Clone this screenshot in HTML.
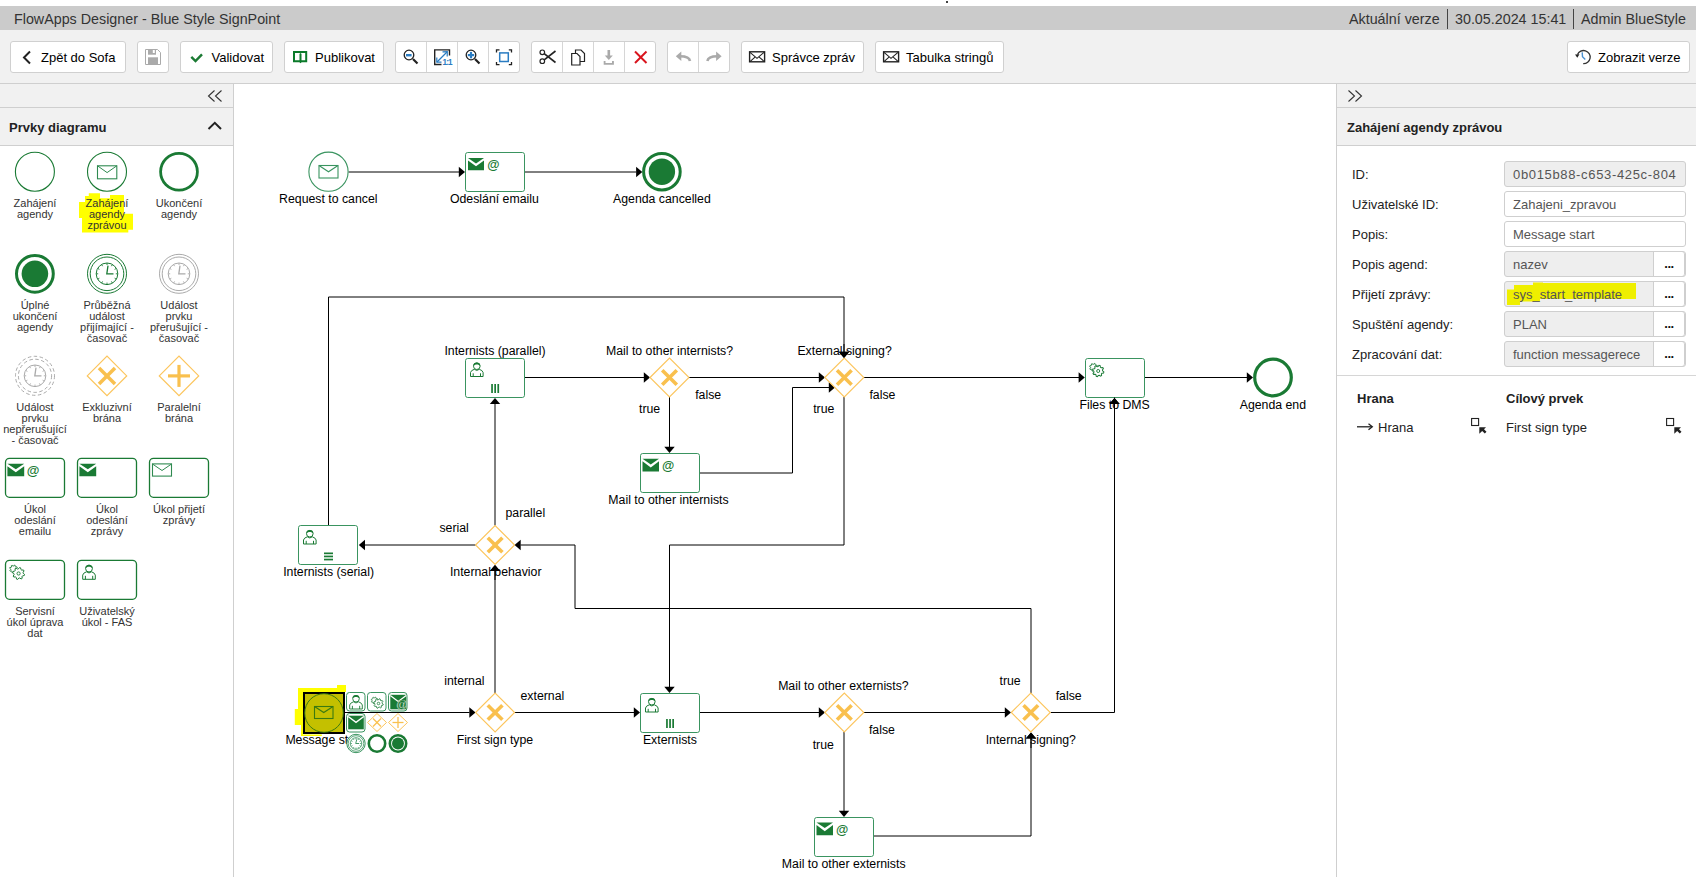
<!DOCTYPE html>
<html><head><meta charset="utf-8">
<style>
*{box-sizing:border-box;margin:0;padding:0}
html,body{width:1696px;height:877px;overflow:hidden;background:#fff;font-family:"Liberation Sans",sans-serif;color:#222}
.abs{position:absolute}
#title{position:absolute;left:0;top:6px;width:1696px;height:24px;background:#cbcbcb;font-size:14.3px;color:#333}
#title .t{position:absolute;left:14px;top:5px;white-space:nowrap}
#title .r{position:absolute;top:5px;white-space:nowrap}
#title .sep{position:absolute;top:3px;width:1px;height:20px;background:#444}
#tb{position:absolute;left:0;top:30px;width:1696px;height:54px;background:#f1f1f1;border-bottom:1px solid #cfcfcf}
.btn{position:absolute;top:11px;height:32px;background:#fff;border:1px solid #d0d0d0;border-radius:3px;font-size:13px;color:#000;white-space:nowrap}
.btn .lbl{position:absolute;top:8px}
.grp{position:absolute;top:11px;height:32px;background:#fff;border:1px solid #d0d0d0;border-radius:3px}
.grp .dv{position:absolute;top:0;width:1px;height:30px;background:#d6d6d6}
.grp svg{position:absolute}
#lp{position:absolute;left:0;top:84px;width:234px;height:793px;border-right:1px solid #cfcfcf;background:#fff}
.bar{position:absolute;left:0;width:100%;background:#f1f1f1;border-bottom:1px solid #cfcfcf}
#rp{position:absolute;left:1336px;top:84px;width:360px;height:793px;border-left:1px solid #cfcfcf;background:#fff}
.hdr{font-size:13px;font-weight:bold;color:#222;position:absolute;white-space:nowrap}
.pl{position:absolute;font-size:11px;line-height:11px;color:#222;text-align:center;width:72px}
.fl{position:absolute;left:15px;font-size:13px;color:#222;white-space:nowrap}
.inp{position:absolute;left:167px;width:182px;height:26px;border:1px solid #cfcfcf;border-radius:3px;background:#fff;font-size:13px;color:#555;white-space:nowrap;overflow:hidden}
.inp.g{background:#eeeeee}
.inp span{position:absolute;left:8px;top:5px}
.dots{position:absolute;right:0;top:-1px;width:32px;height:26px;border:1px solid #cfcfcf;border-radius:0 3px 3px 0;background:#fff;font-size:13px;line-height:24px;font-weight:bold;color:#111;text-align:center;letter-spacing:-0.5px}
</style></head><body>
<div class="abs" style="left:945.5px;top:0.5px;width:2.2px;height:2.2px;border-radius:50%;background:#000"></div>
<div id="title">
  <div class="t">FlowApps Designer - Blue Style SignPoint</div>
  <div class="r" style="left:1349px">Aktuální verze</div>
  <div class="sep" style="left:1447px"></div>
  <div class="r" style="left:1455px">30.05.2024 15:41</div>
  <div class="sep" style="left:1573px"></div>
  <div class="r" style="left:1581px">Admin BlueStyle</div>
</div>
<div id="tb">
  <div class="btn" style="left:10px;width:116px"><svg class="abs" style="left:0;top:0" width="40" height="32"><polyline points="19,9.5 13,15.5 19,21.5" fill="none" stroke="#222" stroke-width="2"/></svg><span class="lbl" style="left:30px">Zpět do Sofa</span></div>
  <div class="btn" style="left:137px;width:32px"><svg class="abs" style="left:0;top:0" width="32" height="32"><path d="M7.5,7.5 H19.5 L22.5,10.5 V22.5 H7.5 Z" fill="none" stroke="#aaa" stroke-width="1"/><rect x="10" y="7" width="8" height="5.7" fill="#aaa"/><rect x="14.8" y="8" width="2" height="3" fill="#fff"/><rect x="10" y="15.3" width="10" height="7.5" fill="#aaa"/></svg></div>
  <div class="btn" style="left:180px;width:93px"><svg class="abs" style="left:0;top:0" width="30" height="32"><polyline points="10.3,14.8 14.5,19 21,12.3" fill="none" stroke="#1b7a33" stroke-width="2.4"/></svg><span class="lbl" style="left:30.5px">Validovat</span></div>
  <div class="btn" style="left:284px;width:100px"><svg class="abs" style="left:0;top:0" width="30" height="32"><path d="M9,10 H14.8 L15.5,10.7 L16.2,10 H21.2 V19.2 H16.2 L15.5,19.9 L14.8,19.2 H9 Z M15.5,10.7 V19.4" fill="none" stroke="#0b7a2a" stroke-width="2"/></svg><span class="lbl" style="left:30px">Publikovat</span></div>
  <div class="grp" style="left:395px;width:125px">
    <div class="dv" style="left:30px"></div><div class="dv" style="left:61px"></div><div class="dv" style="left:92px"></div>
    <svg class="abs" style="left:0;top:0" width="125" height="32">
      <g transform="translate(0,0)"><circle cx="13" cy="13" r="4.8" fill="none" stroke="#222" stroke-width="1.3"/><rect x="10" y="12" width="5.6" height="2.4" fill="#2a7cc2"/><line x1="17" y1="17" x2="21.5" y2="21.5" stroke="#222" stroke-width="2.2"/></g>
      <g><path d="M38.7,17 V7.9 H53.5 V13.5 M38.7,17 V22.5 H45.5" fill="none" stroke="#222" stroke-width="1.4"/><line x1="41" y1="20" x2="51" y2="10" stroke="#2a7cc2" stroke-width="1.2"/><polyline points="46.5,9.8 51.3,9.7 51.2,14.5" fill="none" stroke="#2a7cc2" stroke-width="1.2"/><polyline points="40.8,15.5 40.8,20.2 45.5,20.2" fill="none" stroke="#2a7cc2" stroke-width="1.2"/><rect x="46.8" y="15.8" width="8" height="8" fill="#fff"/><text x="46.6" y="22.8" font-size="8.2" font-weight="bold" fill="#2a7cc2" font-family="Liberation Sans" letter-spacing="-0.9">1:1</text></g>
      <g><circle cx="75" cy="13" r="4.8" fill="none" stroke="#222" stroke-width="1.3"/><rect x="71.8" y="12" width="6.4" height="2.2" fill="#2a7cc2"/><rect x="73.9" y="9.9" width="2.2" height="6.4" fill="#2a7cc2"/><line x1="79" y1="17" x2="83.5" y2="21.5" stroke="#222" stroke-width="2.2"/></g>
      <g fill="none" stroke="#222" stroke-width="1.3"><polyline points="100.5,10.5 100.5,7.9 103.5,7.9"/><polyline points="112.8,7.9 115.5,7.9 115.5,10.5"/><polyline points="100.5,20 100.5,22.6 103.5,22.6"/><polyline points="112.8,22.6 115.5,22.6 115.5,20"/><rect x="103.7" y="10.9" width="8.6" height="8.6" stroke="#2a7cc2" stroke-width="1.5"/></g>
    </svg>
  </div>
  <div class="grp" style="left:531px;width:125px">
    <div class="dv" style="left:30px"></div><div class="dv" style="left:61px"></div><div class="dv" style="left:92px"></div>
    <svg class="abs" style="left:0;top:0" width="125" height="32">
      <g fill="none" stroke="#222" stroke-width="1.2"><circle cx="10.3" cy="10.3" r="2.3"/><circle cx="10.3" cy="19.2" r="2.3"/><line x1="12.2" y1="11.6" x2="23.5" y2="20.5" stroke-width="1.6"/><line x1="12.2" y1="17.9" x2="23.5" y2="9" stroke-width="1.6"/></g>
      <g fill="#fff" stroke="#222" stroke-width="1.2"><path d="M43.5,8 H49 L52.5,11.5 V19.5 H43.5 Z"/><path d="M39.7,11.5 H45 L48,14.5 V23 H39.7 Z"/></g>
      <g fill="#aaa"><rect x="75.5" y="8" width="2.6" height="6"/><polygon points="72.8,13.5 80.8,13.5 76.8,18"/><path d="M71.7,19 H73.5 V21 H80 V19 H81.9 V22.8 H71.7 Z"/></g>
      <g stroke="#d9141d" stroke-width="2"><line x1="103" y1="9.5" x2="114.5" y2="21"/><line x1="114.5" y1="9.5" x2="103" y2="21"/></g>
    </svg>
  </div>
  <div class="grp" style="left:667px;width:63px">
    <div class="dv" style="left:30px"></div>
    <svg class="abs" style="left:0;top:0" width="63" height="32">
      <g fill="none" stroke="#aaa" stroke-width="2.6"><path d="M12,14.3 Q21.3,14.3 22,19"/><path d="M49.4,14.3 Q40.1,14.3 39.4,19"/></g><g fill="#aaa"><polygon points="7.8,14.3 13.3,9.6 13.3,19"/><polygon points="53.6,14.3 48.1,9.6 48.1,19"/></g>
    </svg>
  </div>
  <div class="btn" style="left:741px;width:123px"><svg class="abs" style="left:0;top:0" width="30" height="32"><g transform="translate(-1,-0.7)"><rect x="8.6" y="10.5" width="15" height="10" fill="none" stroke="#222" stroke-width="1.4"/><polyline points="9,11 16,17 23,11" fill="none" stroke="#222" stroke-width="1.1"/><line x1="9" y1="20.3" x2="14" y2="15.8" stroke="#222" stroke-width="1.1"/><line x1="23.3" y1="20.3" x2="18.2" y2="15.8" stroke="#222" stroke-width="1.1"/></g></svg><span class="lbl" style="left:30px">Správce zpráv</span></div>
  <div class="btn" style="left:875px;width:129px"><svg class="abs" style="left:0;top:0" width="30" height="32"><g transform="translate(-1,-0.7)"><rect x="8.6" y="10.5" width="15" height="10" fill="none" stroke="#222" stroke-width="1.4"/><polyline points="9,11 16,17 23,11" fill="none" stroke="#222" stroke-width="1.1"/><line x1="9" y1="20.3" x2="14" y2="15.8" stroke="#222" stroke-width="1.1"/><line x1="23.3" y1="20.3" x2="18.2" y2="15.8" stroke="#222" stroke-width="1.1"/></g></svg><span class="lbl" style="left:30px">Tabulka stringů</span></div>
  <div class="btn" style="left:1567px;width:123px"><svg class="abs" style="left:0;top:0" width="30" height="32"><g transform="translate(-1.3,-0.6)"><path d="M10.8,13.2 A6.6,6.6 0 1 1 16.5,22.3" fill="none" stroke="#333" stroke-width="1.3"/><polygon points="8.3,13 12.8,12.8 10.6,16.4" fill="#222"/><polyline points="15.5,11 15.8,15.4 18.6,18" fill="none" stroke="#4a90d0" stroke-width="1.4"/></g></svg><span class="lbl" style="left:30px">Zobrazit verze</span></div>
</div>
<div id="lp">
  <div class="bar" style="top:0;height:24px"></div>
  <div class="bar" style="top:24px;height:38px"></div>
  <div class="hdr" style="left:9px;top:36px">Prvky diagramu</div>
  <svg class="abs" style="left:200px;top:0" width="33" height="62"><g fill="none" stroke="#333" stroke-width="1.1"><polyline points="14.5,6.5 8.5,12 14.5,17.5"/><polyline points="21.5,6.5 15.5,12 21.5,17.5"/><polyline points="8.5,45 14.8,38.8 21,45" stroke-width="2" stroke="#222"/></g></svg>
</div>
<div id="cv" class="abs" style="left:234px;top:84px;width:1102px;height:793px;background:#fff"></div>
<div id="rp">
  <div class="bar" style="top:0;height:24px"></div>
  <div class="bar" style="top:24px;height:38px"></div>
  <svg class="abs" style="left:0;top:0" width="40" height="24"><g fill="none" stroke="#333" stroke-width="1.1"><polyline points="11.5,6.5 17.5,12 11.5,17.5"/><polyline points="18.5,6.5 24.5,12 18.5,17.5"/></g></svg>
  <div class="hdr" style="left:10px;top:36px">Zahájení agendy zprávou</div>
  <div class="fl" style="top:83px">ID:</div><div class="inp g" style="top:77px"><span style="letter-spacing:0.66px">0b015b88-c653-425c-804</span></div>
  <div class="fl" style="top:113px">Uživatelské ID:</div><div class="inp" style="top:107px"><span>Zahajeni_zpravou</span></div>
  <div class="fl" style="top:143px">Popis:</div><div class="inp" style="top:137px"><span>Message start</span></div>
  <div class="fl" style="top:173px">Popis agend:</div><div class="inp g" style="top:167px"><span>nazev</span><div class="dots">...</div></div>
  <div class="fl" style="top:203px">Přijetí zprávy:</div><div class="inp g" style="top:197px"><svg class="abs" style="left:0;top:0" width="140" height="26"><path d="M2,23 V7.5 H9 V3 H28 V0.5 H38 V1 H131 V17 H35 V19.5 H15 V23 Z" fill="#efef00"/></svg><span>sys_start_template</span><div class="dots">...</div></div>
  <div class="fl" style="top:233px">Spuštění agendy:</div><div class="inp g" style="top:227px"><span>PLAN</span><div class="dots">...</div></div>
  <div class="fl" style="top:263px">Zpracování dat:</div><div class="inp g" style="top:257px"><span>function messagerece</span><div class="dots">...</div></div>
  <div class="abs" style="left:0;top:291px;width:359px;height:1px;background:#d6d6d6"></div>
  <div class="hdr" style="left:20px;top:307px">Hrana</div>
  <div class="hdr" style="left:169px;top:307px">Cílový prvek</div>
  <svg class="abs" style="left:0;top:320px" width="359" height="40"><g stroke="#222" fill="none"><line x1="20" y1="22.8" x2="35" y2="22.8" stroke-width="1.3"/><polyline points="31.5,19.8 35.3,22.8 31.5,25.8" stroke-width="1.3"/>
  <rect x="134.6" y="14.5" width="7" height="7" stroke-width="1.1"/><rect x="329.6" y="14.5" width="7" height="7" stroke-width="1.1"/></g>
  <g fill="#222"><path d="M142.3,23.2 H149 L147,25.2 L149.5,27.8 L147.8,29.5 L145.2,27 L142.3,29.8 Z"/><path d="M337.3,23.2 H344 L342,25.2 L344.5,27.8 L342.8,29.5 L340.2,27 L337.3,29.8 Z"/></g></svg>
  <div class="fl" style="left:41px;top:336px">Hrana</div>
  <div class="fl" style="left:169px;top:336px">First sign type</div>
</div>
<svg id="ov" class="abs" style="left:0;top:0" width="1696" height="877"><circle cx="34.9" cy="171.7" r="19.5" fill="none" stroke="#1a7a34" stroke-width="1.1"/>
<circle cx="107" cy="171.7" r="19.5" fill="none" stroke="#1a7a34" stroke-width="1.1"/>
<rect x="97.5" y="165.8" width="19.3" height="13" fill="none" stroke="#2f8a50" stroke-width="1.1"/><polyline points="97.5,165.8 107.1,172.6 116.8,165.8" fill="none" stroke="#2f8a50" stroke-width="1"/>
<circle cx="179" cy="171.7" r="18.4" fill="none" stroke="#1a7a34" stroke-width="2.8"/>
<circle cx="34.9" cy="273.8" r="18.4" fill="none" stroke="#1a7a34" stroke-width="3"/><circle cx="34.9" cy="273.8" r="13.3" fill="#1a7a34"/>
<circle cx="107" cy="273.8" r="19.5" fill="none" stroke="#1a7a34" stroke-width="1"/><circle cx="107" cy="273.8" r="16.8" fill="none" stroke="#1a7a34" stroke-width="1"/>
<circle cx="107" cy="273.8" r="10.8" fill="none" stroke="#1a7a34" stroke-width="1"/>
<g stroke="#1a7a34" stroke-width="0.9"><line x1="117.80" y1="273.80" x2="115.80" y2="273.80"/><line x1="116.35" y1="279.20" x2="114.62" y2="278.20"/><line x1="112.40" y1="283.15" x2="111.40" y2="281.42"/><line x1="107.00" y1="284.60" x2="107.00" y2="282.60"/><line x1="101.60" y1="283.15" x2="102.60" y2="281.42"/><line x1="97.65" y1="279.20" x2="99.38" y2="278.20"/><line x1="96.20" y1="273.80" x2="98.20" y2="273.80"/><line x1="97.65" y1="268.40" x2="99.38" y2="269.40"/><line x1="101.60" y1="264.45" x2="102.60" y2="266.18"/><line x1="107.00" y1="263.00" x2="107.00" y2="265.00"/><line x1="112.40" y1="264.45" x2="111.40" y2="266.18"/><line x1="116.35" y1="268.40" x2="114.62" y2="269.40"/></g>
<polyline points="108,265.7 106.8,273.8 113.48,273.8" fill="none" stroke="#1a7a34" stroke-width="1.3"/>
<circle cx="179" cy="273.8" r="19.5" fill="none" stroke="#aaa" stroke-width="1"/><circle cx="179" cy="273.8" r="16.8" fill="none" stroke="#aaa" stroke-width="1"/>
<circle cx="179" cy="273.8" r="10.8" fill="none" stroke="#aaa" stroke-width="1"/>
<g stroke="#aaa" stroke-width="0.9"><line x1="189.80" y1="273.80" x2="187.80" y2="273.80"/><line x1="188.35" y1="279.20" x2="186.62" y2="278.20"/><line x1="184.40" y1="283.15" x2="183.40" y2="281.42"/><line x1="179.00" y1="284.60" x2="179.00" y2="282.60"/><line x1="173.60" y1="283.15" x2="174.60" y2="281.42"/><line x1="169.65" y1="279.20" x2="171.38" y2="278.20"/><line x1="168.20" y1="273.80" x2="170.20" y2="273.80"/><line x1="169.65" y1="268.40" x2="171.38" y2="269.40"/><line x1="173.60" y1="264.45" x2="174.60" y2="266.18"/><line x1="179.00" y1="263.00" x2="179.00" y2="265.00"/><line x1="184.40" y1="264.45" x2="183.40" y2="266.18"/><line x1="188.35" y1="268.40" x2="186.62" y2="269.40"/></g>
<polyline points="180,265.7 178.8,273.8 185.48,273.8" fill="none" stroke="#aaa" stroke-width="1.3"/>
<circle cx="35" cy="375.8" r="19.5" fill="none" stroke="#aaa" stroke-width="1" stroke-dasharray="3.5,2.5"/><circle cx="35" cy="375.8" r="16.6" fill="none" stroke="#aaa" stroke-width="1" stroke-dasharray="3.5,2.5"/>
<circle cx="35" cy="375.8" r="10.8" fill="none" stroke="#aaa" stroke-width="1"/>
<g stroke="#aaa" stroke-width="0.9"><line x1="45.80" y1="375.80" x2="43.80" y2="375.80"/><line x1="44.35" y1="381.20" x2="42.62" y2="380.20"/><line x1="40.40" y1="385.15" x2="39.40" y2="383.42"/><line x1="35.00" y1="386.60" x2="35.00" y2="384.60"/><line x1="29.60" y1="385.15" x2="30.60" y2="383.42"/><line x1="25.65" y1="381.20" x2="27.38" y2="380.20"/><line x1="24.20" y1="375.80" x2="26.20" y2="375.80"/><line x1="25.65" y1="370.40" x2="27.38" y2="371.40"/><line x1="29.60" y1="366.45" x2="30.60" y2="368.18"/><line x1="35.00" y1="365.00" x2="35.00" y2="367.00"/><line x1="40.40" y1="366.45" x2="39.40" y2="368.18"/><line x1="44.35" y1="370.40" x2="42.62" y2="371.40"/></g>
<polyline points="36,367.7 34.8,375.8 41.480000000000004,375.8" fill="none" stroke="#aaa" stroke-width="1.3"/>
<path d="M87.3,375.9 L107,356.2 L126.7,375.9 L107,395.6 Z" fill="none" stroke="#fcc55c" stroke-width="1.2"/>
<g stroke="#f9c04e" stroke-width="3.6"><line x1="99" y1="367.9" x2="115" y2="383.9"/><line x1="115" y1="367.9" x2="99" y2="383.9"/></g>
<path d="M159.3,375.9 L179,356.2 L198.7,375.9 L179,395.6 Z" fill="none" stroke="#fcc55c" stroke-width="1.2"/>
<g stroke="#f9c04e" stroke-width="3.2"><line x1="168" y1="375.9" x2="190" y2="375.9"/><line x1="179" y1="364.9" x2="179" y2="386.9"/></g>
<rect x="5.5" y="458.3" width="59" height="39" rx="4" fill="#fff" stroke="#1a7a34" stroke-width="1.3"/>
<rect x="77.5" y="458.3" width="59" height="39" rx="4" fill="#fff" stroke="#1a7a34" stroke-width="1.3"/>
<rect x="149.5" y="458.3" width="59" height="39" rx="4" fill="#fff" stroke="#1a7a34" stroke-width="1.3"/>
<path d="M7.4,463.7 H24.200000000000003 L15.8,469.24399999999997 Z" fill="#1a7a34"/>
<path d="M7.4,466.21999999999997 L15.8,472.268 L24.200000000000003,466.21999999999997 V476.3 H7.4 Z" fill="#1a7a34"/>
<text x="26.8" y="474.6" font-family="Liberation Sans" font-weight="bold" font-size="13" fill="#1a7a34">@</text>
<path d="M79.4,463.7 H96.2 L87.80000000000001,469.24399999999997 Z" fill="#1a7a34"/>
<path d="M79.4,466.21999999999997 L87.80000000000001,472.268 L96.2,466.21999999999997 V476.3 H79.4 Z" fill="#1a7a34"/>
<rect x="152.5" y="463.9" width="19" height="12.2" fill="none" stroke="#2f8a50" stroke-width="1.1"/><polyline points="152.5,464 162,470.5 171.5,464" fill="none" stroke="#2f8a50" stroke-width="1"/>
<rect x="5.5" y="560.3" width="59" height="39" rx="4" fill="#fff" stroke="#1a7a34" stroke-width="1.3"/>
<rect x="77.5" y="560.3" width="59" height="39" rx="4" fill="#fff" stroke="#1a7a34" stroke-width="1.3"/>
<path d="M17.52,569.79 L17.29,570.54 L16.01,570.62 L15.64,571.06 L15.81,572.33 L15.12,572.70 L14.16,571.85 L13.59,571.90 L12.81,572.92 L12.06,572.69 L11.98,571.41 L11.54,571.04 L10.27,571.21 L9.90,570.52 L10.75,569.56 L10.70,568.99 L9.68,568.21 L9.91,567.46 L11.19,567.38 L11.56,566.94 L11.39,565.67 L12.08,565.30 L13.04,566.15 L13.61,566.10 L14.39,565.08 L15.14,565.31 L15.22,566.59 L15.66,566.96 L16.93,566.79 L17.30,567.48 L16.45,568.44 L16.50,569.01 Z" fill="#fff" stroke="#1a7a34" stroke-width="0.9"/>
<path d="M24.53,574.40 L24.24,575.54 L22.54,575.88 L22.00,576.60 L22.16,578.33 L21.15,578.93 L19.71,577.97 L18.81,578.10 L17.70,579.43 L16.56,579.14 L16.22,577.44 L15.50,576.90 L13.77,577.06 L13.17,576.05 L14.13,574.61 L14.00,573.71 L12.67,572.60 L12.96,571.46 L14.66,571.12 L15.20,570.40 L15.04,568.67 L16.05,568.07 L17.49,569.03 L18.39,568.90 L19.50,567.57 L20.64,567.86 L20.98,569.56 L21.70,570.10 L23.43,569.94 L24.03,570.95 L23.07,572.39 L23.20,573.29 Z" fill="#fff" stroke="#1a7a34" stroke-width="1"/>
<circle cx="18.6" cy="573.5" r="1.6" fill="none" stroke="#1a7a34" stroke-width="0.9"/>
<g fill="none" stroke="#1a7a34" stroke-width="1"><circle cx="89.0" cy="568.5999999999999" r="3.4"/><path d="M82.7,579.3 V575.0999999999999 Q83.2,572.8 86.5,571.8 Q89.0,574.0999999999999 91.5,571.8 Q94.8,572.8 95.3,575.0999999999999 V579.3 Z"/><line x1="85.4" y1="575.8" x2="85.4" y2="579.3"/><line x1="92.7" y1="575.8" x2="92.7" y2="579.3"/></g>
<path d="M85.3,568.3999999999999 C85.3,563.5999999999999 92.7,563.5999999999999 92.7,568.3999999999999 C91.0,566.3 87.0,566.3 85.3,568.3999999999999 Z" fill="#1a7a34"/>
<path d="M88.8,193.2 H100 V198.2 H110 V195 H124 V213.8 H133 V229.8 H128.3 V232.6 H82 V218 H79 V202 H85 V196 H88.8 Z" fill="#ffff00"/>
<g font-family="Liberation Sans" font-size="11" fill="#333" text-anchor="middle">
<text x="35" y="206.6">Zahájení</text>
<text x="35" y="217.5">agendy</text>
<text x="107" y="206.6">Zahájení</text>
<text x="107" y="217.5">agendy</text>
<text x="107" y="228.5">zprávou</text>
<text x="179" y="206.6">Ukončení</text>
<text x="179" y="217.5">agendy</text>
<text x="35" y="308.6">Úplné</text>
<text x="35" y="319.6">ukončení</text>
<text x="35" y="330.5">agendy</text>
<text x="107" y="308.6">Průběžná</text>
<text x="107" y="319.6">událost</text>
<text x="107" y="330.5">přijímající -</text>
<text x="107" y="341.5">časovač</text>
<text x="179" y="308.6">Událost</text>
<text x="179" y="319.6">prvku</text>
<text x="179" y="330.5">přerušující -</text>
<text x="179" y="341.5">časovač</text>
<text x="35" y="410.6">Událost</text>
<text x="35" y="421.6">prvku</text>
<text x="35" y="432.5">nepřerušující</text>
<text x="35" y="443.5">- časovač</text>
<text x="107" y="410.6">Exkluzivní</text>
<text x="107" y="421.6">brána</text>
<text x="179" y="410.6">Paralelní</text>
<text x="179" y="421.6">brána</text>
<text x="35" y="513.0">Úkol</text>
<text x="35" y="524.0">odeslání</text>
<text x="35" y="534.9">emailu</text>
<text x="107" y="513.0">Úkol</text>
<text x="107" y="524.0">odeslání</text>
<text x="107" y="534.9">zprávy</text>
<text x="179" y="513.0">Úkol přijetí</text>
<text x="179" y="524.0">zprávy</text>
<text x="35" y="615.0">Servisní</text>
<text x="35" y="626.0">úkol úprava</text>
<text x="35" y="636.9">dat</text>
<text x="107" y="615.0">Uživatelský</text>
<text x="107" y="626.0">úkol - FAS</text>
</g><polyline points="348.5,172 459,172" fill="none" stroke="#000" stroke-width="1"/>
<polygon points="465,172 458.8,166.8 458.8,177.2" fill="#000"/>
<polyline points="525,172 636,172" fill="none" stroke="#000" stroke-width="1"/>
<polygon points="642.3,172 636.0999999999999,166.8 636.0999999999999,177.2" fill="#000"/>
<polyline points="525,377.5 644,377.5" fill="none" stroke="#000" stroke-width="1"/>
<polygon points="650,377.5 643.8,372.3 643.8,382.7" fill="#000"/>
<polyline points="689,377.5 819,377.5" fill="none" stroke="#000" stroke-width="1"/>
<polygon points="825,377.5 818.8,372.3 818.8,382.7" fill="#000"/>
<polyline points="669.5,397 669.5,447" fill="none" stroke="#000" stroke-width="1"/>
<polygon points="669.5,453 664.3,446.8 674.7,446.8" fill="#000"/>
<polyline points="700,473 792.5,473 792.5,387.5 829,387.5" fill="none" stroke="#000" stroke-width="1"/>
<polygon points="835,387.5 828.8,382.3 828.8,392.7" fill="#000"/>
<polyline points="863.5,377.5 1079,377.5" fill="none" stroke="#000" stroke-width="1"/>
<polygon points="1084.8,377.5 1078.6,372.3 1078.6,382.7" fill="#000"/>
<polyline points="1145,377.5 1247,377.5" fill="none" stroke="#000" stroke-width="1"/>
<polygon points="1253,377.5 1246.8,372.3 1246.8,382.7" fill="#000"/>
<polyline points="844,397 844,545 669.5,545 669.5,687" fill="none" stroke="#000" stroke-width="1"/>
<polygon points="669.5,693 664.3,686.8 674.7,686.8" fill="#000"/>
<polyline points="495,525.5 495,404" fill="none" stroke="#000" stroke-width="1"/>
<polygon points="495,398.1 489.8,404.0 500.2,404.0" fill="#000"/>
<polyline points="475.7,545 365,545" fill="none" stroke="#000" stroke-width="1"/>
<polygon points="358.8,545 365.0,539.8 365.0,550.2" fill="#000"/>
<polyline points="328.5,525 328.5,297 844,297 844,352" fill="none" stroke="#000" stroke-width="1"/>
<polygon points="844,358 838.8,351.8 849.2,351.8" fill="#000"/>
<polyline points="1031,693 1031,608.5 575,608.5 575,545 520.5,545" fill="none" stroke="#000" stroke-width="1"/>
<polygon points="514.5,545 520.7,539.8 520.7,550.2" fill="#000"/>
<polyline points="1050.5,712.5 1114.5,712.5 1114.5,403.5" fill="none" stroke="#000" stroke-width="1"/>
<polygon points="1114.5,398.1 1109.3,404.0 1119.7,404.0" fill="#000"/>
<polyline points="345,712.5 469.5,712.5" fill="none" stroke="#000" stroke-width="1"/>
<polygon points="475.5,712.5 469.3,707.3 469.3,717.7" fill="#000"/>
<polyline points="495,693 495,570.5" fill="none" stroke="#000" stroke-width="1"/>
<polygon points="495,565.1 489.8,571.0 500.2,571.0" fill="#000"/>
<polyline points="514.5,712.5 634,712.5" fill="none" stroke="#000" stroke-width="1"/>
<polygon points="640,712.5 633.8,707.3 633.8,717.7" fill="#000"/>
<polyline points="700,712.5 819,712.5" fill="none" stroke="#000" stroke-width="1"/>
<polygon points="825,712.5 818.8,707.3 818.8,717.7" fill="#000"/>
<polyline points="864,712.5 1005,712.5" fill="none" stroke="#000" stroke-width="1"/>
<polygon points="1011,712.5 1004.8,707.3 1004.8,717.7" fill="#000"/>
<polyline points="844,732 844,811" fill="none" stroke="#000" stroke-width="1"/>
<polygon points="844,817 838.8,810.8 849.2,810.8" fill="#000"/>
<polyline points="874,836 1031,836 1031,738" fill="none" stroke="#000" stroke-width="1"/>
<polygon points="1031,732.6 1025.8,738.5 1036.2,738.5" fill="#000"/>
<circle cx="328.5" cy="171.7" r="19.6" fill="#fff" stroke="#3a9460" stroke-width="1.1"/>
<rect x="319" y="165.5" width="19" height="12.5" fill="none" stroke="#3a9460" stroke-width="1.1"/>
<polyline points="319,165.5 328.5,171.75 338,165.5" fill="none" stroke="#3a9460" stroke-width="1.1"/>
<rect x="465.5" y="152.5" width="59" height="39" rx="2.2" ry="2.2" fill="#fff" stroke="#3a9460" stroke-width="1"/>
<path d="M468,158 H484 L476.0,163.412 Z" fill="#1a7a34"/>
<path d="M468,160.46 L476.0,166.364 L484,160.46 V170.3 H468 Z" fill="#1a7a34"/>
<text x="487.3" y="168.6" font-family="Liberation Sans" font-weight="bold" font-size="12.6" fill="#1a7a34">@</text>
<circle cx="661.9" cy="171.7" r="18.3" fill="#fff" stroke="#1a7a34" stroke-width="3"/>
<circle cx="661.9" cy="171.7" r="13.2" fill="#1a7a34"/>
<rect x="465.5" y="358.5" width="59" height="39" rx="2.2" ry="2.2" fill="#fff" stroke="#3a9460" stroke-width="1"/>
<g fill="none" stroke="#1a7a34" stroke-width="1"><circle cx="476.8" cy="366.2" r="3.3"/><path d="M470.5,376.5 V372.5 Q471,370.3 474.3,369.3 Q476.8,371.6 479.3,369.3 Q482.6,370.3 483.1,372.5 V376.5 Z"/><line x1="473.2" y1="373.3" x2="473.2" y2="376.5"/><line x1="480.5" y1="373.3" x2="480.5" y2="376.5"/></g>
<path d="M473.2,366.0 C473.2,361.4 480.40000000000003,361.4 480.40000000000003,366.0 C478.8,364.0 474.8,364.0 473.2,366.0 Z" fill="#1a7a34"/>
<rect x="491.2" y="384" width="1.7" height="9" fill="#1a7a34"/>
<rect x="494.3" y="384" width="1.7" height="9" fill="#1a7a34"/>
<rect x="497.40000000000003" y="384" width="1.7" height="9" fill="#1a7a34"/>
<path d="M650.0,377.5 L669.5,358.0 L689.0,377.5 L669.5,397.0 Z" fill="#fff" stroke="#fcc55c" stroke-width="1.1"/>
<g stroke="#f9c04e" stroke-width="3.6"><line x1="662.2" y1="370.2" x2="676.8" y2="384.8"/><line x1="676.8" y1="370.2" x2="662.2" y2="384.8"/></g>
<path d="M824.8,377.5 L844.3,358.0 L863.8,377.5 L844.3,397.0 Z" fill="#fff" stroke="#fcc55c" stroke-width="1.1"/>
<g stroke="#f9c04e" stroke-width="3.6"><line x1="837.0" y1="370.2" x2="851.5999999999999" y2="384.8"/><line x1="851.5999999999999" y1="370.2" x2="837.0" y2="384.8"/></g>
<rect x="1085.5" y="358.5" width="59" height="39" rx="2.2" ry="2.2" fill="#fff" stroke="#3a9460" stroke-width="1"/>
<path d="M1097.46,368.09 L1097.23,368.84 L1095.99,368.94 L1095.62,369.39 L1095.75,370.62 L1095.06,370.99 L1094.11,370.19 L1093.53,370.24 L1092.75,371.21 L1092.00,370.98 L1091.90,369.74 L1091.45,369.37 L1090.22,369.50 L1089.85,368.81 L1090.65,367.86 L1090.60,367.28 L1089.63,366.50 L1089.86,365.75 L1091.10,365.65 L1091.47,365.20 L1091.34,363.97 L1092.03,363.60 L1092.98,364.40 L1093.56,364.35 L1094.34,363.38 L1095.09,363.61 L1095.19,364.85 L1095.64,365.22 L1096.87,365.09 L1097.24,365.78 L1096.44,366.73 L1096.49,367.31 Z" fill="#fff" stroke="#1f7d3a" stroke-width="0.95"/>
<path d="M1103.84,371.85 L1103.56,372.93 L1101.94,373.26 L1101.43,373.94 L1101.58,375.59 L1100.62,376.16 L1099.25,375.24 L1098.40,375.37 L1097.35,376.64 L1096.27,376.36 L1095.94,374.74 L1095.26,374.23 L1093.61,374.38 L1093.04,373.42 L1093.96,372.05 L1093.83,371.20 L1092.56,370.15 L1092.84,369.07 L1094.46,368.74 L1094.97,368.06 L1094.82,366.41 L1095.78,365.84 L1097.15,366.76 L1098.00,366.63 L1099.05,365.36 L1100.13,365.64 L1100.46,367.26 L1101.14,367.77 L1102.79,367.62 L1103.36,368.58 L1102.44,369.95 L1102.57,370.80 Z" fill="#fff" stroke="#1f7d3a" stroke-width="1.045"/>
<circle cx="1098.2" cy="371" r="1.52" fill="none" stroke="#1f7d3a" stroke-width="0.95"/>
<circle cx="1273" cy="377.5" r="18.3" fill="#fff" stroke="#1a7a34" stroke-width="3.2"/>
<rect x="640.5" y="453.5" width="59" height="39" rx="2.2" ry="2.2" fill="#fff" stroke="#3a9460" stroke-width="1"/>
<path d="M642.5,458.8 H659.0 L650.75,464.38800000000003 Z" fill="#1a7a34"/>
<path d="M642.5,461.34000000000003 L650.75,467.43600000000004 L659.0,461.34000000000003 V471.5 H642.5 Z" fill="#1a7a34"/>
<text x="662" y="469.8" font-family="Liberation Sans" font-weight="bold" font-size="12.6" fill="#1a7a34">@</text>
<rect x="298.5" y="525.5" width="59" height="39" rx="2.2" ry="2.2" fill="#fff" stroke="#3a9460" stroke-width="1"/>
<g fill="none" stroke="#1a7a34" stroke-width="1"><circle cx="309.8" cy="533.7" r="3.3"/><path d="M303.5,544.0 V540.0 Q304,537.8 307.3,536.8 Q309.8,539.1 312.3,536.8 Q315.6,537.8 316.1,540.0 V544.0 Z"/><line x1="306.2" y1="540.8" x2="306.2" y2="544.0"/><line x1="313.5" y1="540.8" x2="313.5" y2="544.0"/></g>
<path d="M306.2,533.5 C306.2,528.9000000000001 313.40000000000003,528.9000000000001 313.40000000000003,533.5 C311.8,531.5 307.8,531.5 306.2,533.5 Z" fill="#1a7a34"/>
<rect x="324.0" y="552.5" width="9" height="1.7" fill="#1a7a34"/>
<rect x="324.0" y="555.6" width="9" height="1.7" fill="#1a7a34"/>
<rect x="324.0" y="558.7" width="9" height="1.7" fill="#1a7a34"/>
<path d="M475.6,545 L495.1,525.5 L514.6,545 L495.1,564.5 Z" fill="#fff" stroke="#fcc55c" stroke-width="1.1"/>
<g stroke="#f9c04e" stroke-width="3.6"><line x1="487.8" y1="537.7" x2="502.40000000000003" y2="552.3"/><line x1="502.40000000000003" y1="537.7" x2="487.8" y2="552.3"/></g>
<path d="M475.6,712.5 L495.1,693.0 L514.6,712.5 L495.1,732.0 Z" fill="#fff" stroke="#fcc55c" stroke-width="1.1"/>
<g stroke="#f9c04e" stroke-width="3.6"><line x1="487.8" y1="705.2" x2="502.40000000000003" y2="719.8"/><line x1="502.40000000000003" y1="705.2" x2="487.8" y2="719.8"/></g>
<rect x="640.5" y="693.5" width="59" height="39" rx="2.2" ry="2.2" fill="#fff" stroke="#3a9460" stroke-width="1"/>
<g fill="none" stroke="#1a7a34" stroke-width="1"><circle cx="651.8" cy="701.7" r="3.3"/><path d="M645.5,712.0 V708.0 Q646,705.8 649.3,704.8 Q651.8,707.1 654.3,704.8 Q657.6,705.8 658.1,708.0 V712.0 Z"/><line x1="648.2" y1="708.8" x2="648.2" y2="712.0"/><line x1="655.5" y1="708.8" x2="655.5" y2="712.0"/></g>
<path d="M648.1999999999999,701.5 C648.1999999999999,696.9000000000001 655.4,696.9000000000001 655.4,701.5 C653.8,699.5 649.8,699.5 648.1999999999999,701.5 Z" fill="#1a7a34"/>
<rect x="666.1" y="719" width="1.7" height="9" fill="#1a7a34"/>
<rect x="669.2" y="719" width="1.7" height="9" fill="#1a7a34"/>
<rect x="672.3000000000001" y="719" width="1.7" height="9" fill="#1a7a34"/>
<path d="M824.8,712.5 L844.3,693.0 L863.8,712.5 L844.3,732.0 Z" fill="#fff" stroke="#fcc55c" stroke-width="1.1"/>
<g stroke="#f9c04e" stroke-width="3.6"><line x1="837.0" y1="705.2" x2="851.5999999999999" y2="719.8"/><line x1="851.5999999999999" y1="705.2" x2="837.0" y2="719.8"/></g>
<path d="M1011.3,712.5 L1030.8,693.0 L1050.3,712.5 L1030.8,732.0 Z" fill="#fff" stroke="#fcc55c" stroke-width="1.1"/>
<g stroke="#f9c04e" stroke-width="3.6"><line x1="1023.5" y1="705.2" x2="1038.1" y2="719.8"/><line x1="1038.1" y1="705.2" x2="1023.5" y2="719.8"/></g>
<rect x="814.5" y="817.5" width="59" height="39" rx="2.2" ry="2.2" fill="#fff" stroke="#3a9460" stroke-width="1"/>
<path d="M816.5,822.5 H833.0 L824.75,828.088 Z" fill="#1a7a34"/>
<path d="M816.5,825.04 L824.75,831.136 L833.0,825.04 V835.2 H816.5 Z" fill="#1a7a34"/>
<text x="836" y="833.5" font-family="Liberation Sans" font-weight="bold" font-size="12.6" fill="#1a7a34">@</text>
<g font-family="Liberation Sans" font-size="12.3" fill="#000">
<text x="328.3" y="203" text-anchor="middle">Request to cancel</text>
<text x="494.4" y="203" text-anchor="middle">Odeslání emailu</text>
<text x="661.9" y="203" text-anchor="middle">Agenda cancelled</text>
<text x="495" y="355" text-anchor="middle">Internists (parallel)</text>
<text x="669.5" y="355" text-anchor="middle">Mail to other internists?</text>
<text x="844.6" y="354.7" text-anchor="middle">External signing?</text>
<text x="695.2" y="398.6" text-anchor="start">false</text>
<text x="639" y="413.4" text-anchor="start">true</text>
<text x="869.4" y="398.9" text-anchor="start">false</text>
<text x="813.2" y="413.2" text-anchor="start">true</text>
<text x="1114.6" y="408.5" text-anchor="middle">Files to DMS</text>
<text x="1272.9" y="408.5" text-anchor="middle">Agenda end</text>
<text x="668.5" y="504.4" text-anchor="middle">Mail to other internists</text>
<text x="439.4" y="532" text-anchor="start">serial</text>
<text x="505.5" y="517" text-anchor="start">parallel</text>
<text x="328.6" y="575.8" text-anchor="middle">Internists (serial)</text>
<text x="495.7" y="575.8" text-anchor="middle">Internal behavior</text>
<text x="444.2" y="684.8" text-anchor="start">internal</text>
<text x="520.5" y="699.8" text-anchor="start">external</text>
<text x="324" y="744" text-anchor="middle">Message start</text>
<text x="494.9" y="744" text-anchor="middle">First sign type</text>
<text x="669.9" y="744" text-anchor="middle">Externists</text>
<text x="843.4" y="689.7" text-anchor="middle">Mail to other externists?</text>
<text x="868.9" y="733.7" text-anchor="start">false</text>
<text x="812.7" y="748.6" text-anchor="start">true</text>
<text x="999.5" y="684.7" text-anchor="start">true</text>
<text x="1055.7" y="699.6" text-anchor="start">false</text>
<text x="1030.8" y="744.1" text-anchor="middle">Internal signing?</text>
<text x="843.7" y="867.9" text-anchor="middle">Mail to other externists</text>
</g>
<polygon points="844,358 838.8,351.8 849.2,351.8" fill="#000"/>
<polygon points="1114.5,398.1 1109.3,404.0 1119.7,404.0" fill="#000"/>
<polygon points="495,565.1 489.8,571.0 500.2,571.0" fill="#000"/>
<polygon points="1031,732.6 1025.8,738.5 1036.2,738.5" fill="#000"/>
<polyline points="844,344 844,352" fill="none" stroke="#000" stroke-width="1"/>
<polyline points="1114.5,397.5 1114.5,412" fill="none" stroke="#000" stroke-width="1"/>
<polyline points="495,570 495,580" fill="none" stroke="#000" stroke-width="1"/>
<polyline points="1031,735 1031,748" fill="none" stroke="#000" stroke-width="1"/>
<path d="M298,688 H337 V685 H346 V692 H303 V734.5 H321.8 V736 H301 V725 H294.8 V709 H298 Z" fill="#ffff00"/>
<rect x="304" y="693" width="40" height="40" fill="#c4c000" stroke="#000" stroke-width="2"/>
<circle cx="324" cy="713" r="19.3" fill="none" stroke="#3b7a10" stroke-width="1"/>
<rect x="314.5" y="706.5" width="18.5" height="12" fill="none" stroke="#3b7a10" stroke-width="1.1"/>
<polyline points="314.5,706.5 323.75,712.5 333.0,706.5" fill="none" stroke="#3b7a10" stroke-width="1.1"/>
<rect x="346.5" y="692.5" width="18.5" height="18.5" rx="3" fill="#fff" stroke="#3a9460" stroke-width="1"/>
<g fill="none" stroke="#1a7a34" stroke-width="0.9"><circle cx="356.0" cy="698.7" r="3.3"/><path d="M349.7,709.0 V705.0 Q350.2,702.8 353.5,701.8 Q356.0,704.1 358.5,701.8 Q361.8,702.8 362.3,705.0 V709.0 Z"/><line x1="352.4" y1="705.8" x2="352.4" y2="709.0"/><line x1="359.7" y1="705.8" x2="359.7" y2="709.0"/></g>
<path d="M352.4,698.5 C352.4,693.9000000000001 359.6,693.9000000000001 359.6,698.5 C358.0,696.5 354.0,696.5 352.4,698.5 Z" fill="#1a7a34"/>
<rect x="367.5" y="692.5" width="18.5" height="18.5" rx="3" fill="#fff" stroke="#3a9460" stroke-width="1"/>
<path d="M377.87,701.05 L377.68,701.68 L376.64,701.77 L376.33,702.14 L376.44,703.18 L375.85,703.49 L375.05,702.81 L374.57,702.86 L373.91,703.67 L373.28,703.48 L373.19,702.44 L372.82,702.13 L371.78,702.24 L371.47,701.65 L372.15,700.85 L372.10,700.37 L371.29,699.71 L371.48,699.08 L372.52,698.99 L372.83,698.62 L372.72,697.58 L373.31,697.27 L374.11,697.95 L374.59,697.90 L375.25,697.09 L375.88,697.28 L375.97,698.32 L376.34,698.63 L377.38,698.52 L377.69,699.11 L377.01,699.91 L377.06,700.39 Z" fill="#fff" stroke="#1f7d3a" stroke-width="0.8"/>
<path d="M383.25,704.22 L383.01,705.13 L381.65,705.40 L381.22,705.98 L381.35,707.36 L380.54,707.84 L379.38,707.07 L378.67,707.18 L377.78,708.25 L376.87,708.01 L376.60,706.65 L376.02,706.22 L374.64,706.35 L374.16,705.54 L374.93,704.38 L374.82,703.67 L373.75,702.78 L373.99,701.87 L375.35,701.60 L375.78,701.02 L375.65,699.64 L376.46,699.16 L377.62,699.93 L378.33,699.82 L379.22,698.75 L380.13,698.99 L380.40,700.35 L380.98,700.78 L382.36,700.65 L382.84,701.46 L382.07,702.62 L382.18,703.33 Z" fill="#fff" stroke="#1f7d3a" stroke-width="0.8800000000000001"/>
<circle cx="378.5" cy="703.5" r="1.2800000000000002" fill="none" stroke="#1f7d3a" stroke-width="0.8"/>
<rect x="388.5" y="692.5" width="18.5" height="18.5" rx="3" fill="#fff" stroke="#3a9460" stroke-width="1"/>
<path d="M390.3,694.8 H406.2 V709.3 H390.3 Z" fill="#1a7a34"/>
<polyline points="390.3,695.6 398.2,701.6 406.2,695.6" fill="none" stroke="#fff" stroke-width="1.2"/>
<text x="396.2" y="708.3" font-family="Liberation Sans" font-weight="bold" font-size="11.5" fill="#fff" stroke="#1a7a34" stroke-width="0.3">@</text>
<rect x="346.5" y="713.5" width="18.5" height="18.5" rx="3" fill="#fff" stroke="#3a9460" stroke-width="1"/>
<path d="M348.2,715.7 H363.8 V729.3 H348.2 Z" fill="#1a7a34"/>
<polyline points="348.2,716.5 356,722.3 363.8,716.5" fill="none" stroke="#fff" stroke-width="1.4"/>
<path d="M367.5,722.5 L377,713.5 L386.5,722.5 L377,731.5 Z" fill="#fff" stroke="#fcc55c" stroke-width="1"/>
<g stroke="#f9c04e" stroke-width="1.3"><line x1="373" y1="718.5" x2="381" y2="726.5"/><line x1="381" y1="718.5" x2="373" y2="726.5"/></g>
<path d="M388.5,722.5 L398,713.5 L407.5,722.5 L398,731.5 Z" fill="#fff" stroke="#fcc55c" stroke-width="1"/>
<g stroke="#f9c04e" stroke-width="1.3"><line x1="392.5" y1="722.5" x2="403.5" y2="722.5"/><line x1="398" y1="717" x2="398" y2="728"/></g>
<circle cx="356" cy="743.5" r="9.2" fill="#fff" stroke="#3a9460" stroke-width="1"/><circle cx="356" cy="743.5" r="7.8" fill="none" stroke="#3a9460" stroke-width="0.8"/>
<circle cx="356" cy="743.5" r="5.8" fill="none" stroke="#3a9460" stroke-width="0.8"/>
<g stroke="#3a9460" stroke-width="0.7200000000000001"><line x1="361.80" y1="743.50" x2="360.00" y2="743.50"/><line x1="361.02" y1="746.40" x2="359.46" y2="745.50"/><line x1="358.90" y1="748.52" x2="358.00" y2="746.96"/><line x1="356.00" y1="749.30" x2="356.00" y2="747.50"/><line x1="353.10" y1="748.52" x2="354.00" y2="746.96"/><line x1="350.98" y1="746.40" x2="352.54" y2="745.50"/><line x1="350.20" y1="743.50" x2="352.00" y2="743.50"/><line x1="350.98" y1="740.60" x2="352.54" y2="741.50"/><line x1="353.10" y1="738.48" x2="354.00" y2="740.04"/><line x1="356.00" y1="737.70" x2="356.00" y2="739.50"/><line x1="358.90" y1="738.48" x2="358.00" y2="740.04"/><line x1="361.02" y1="740.60" x2="359.46" y2="741.50"/></g>
<polyline points="356.8,739.324 355.7,743.5 359.19,743.5" fill="none" stroke="#3a9460" stroke-width="0.96"/>
<circle cx="377" cy="743.5" r="8.2" fill="#fff" stroke="#1a7a34" stroke-width="2.6"/>
<circle cx="398" cy="743.5" r="8.2" fill="#fff" stroke="#1a7a34" stroke-width="2.6"/><circle cx="398" cy="743.5" r="6" fill="#1a7a34"/></svg>
</body></html>
